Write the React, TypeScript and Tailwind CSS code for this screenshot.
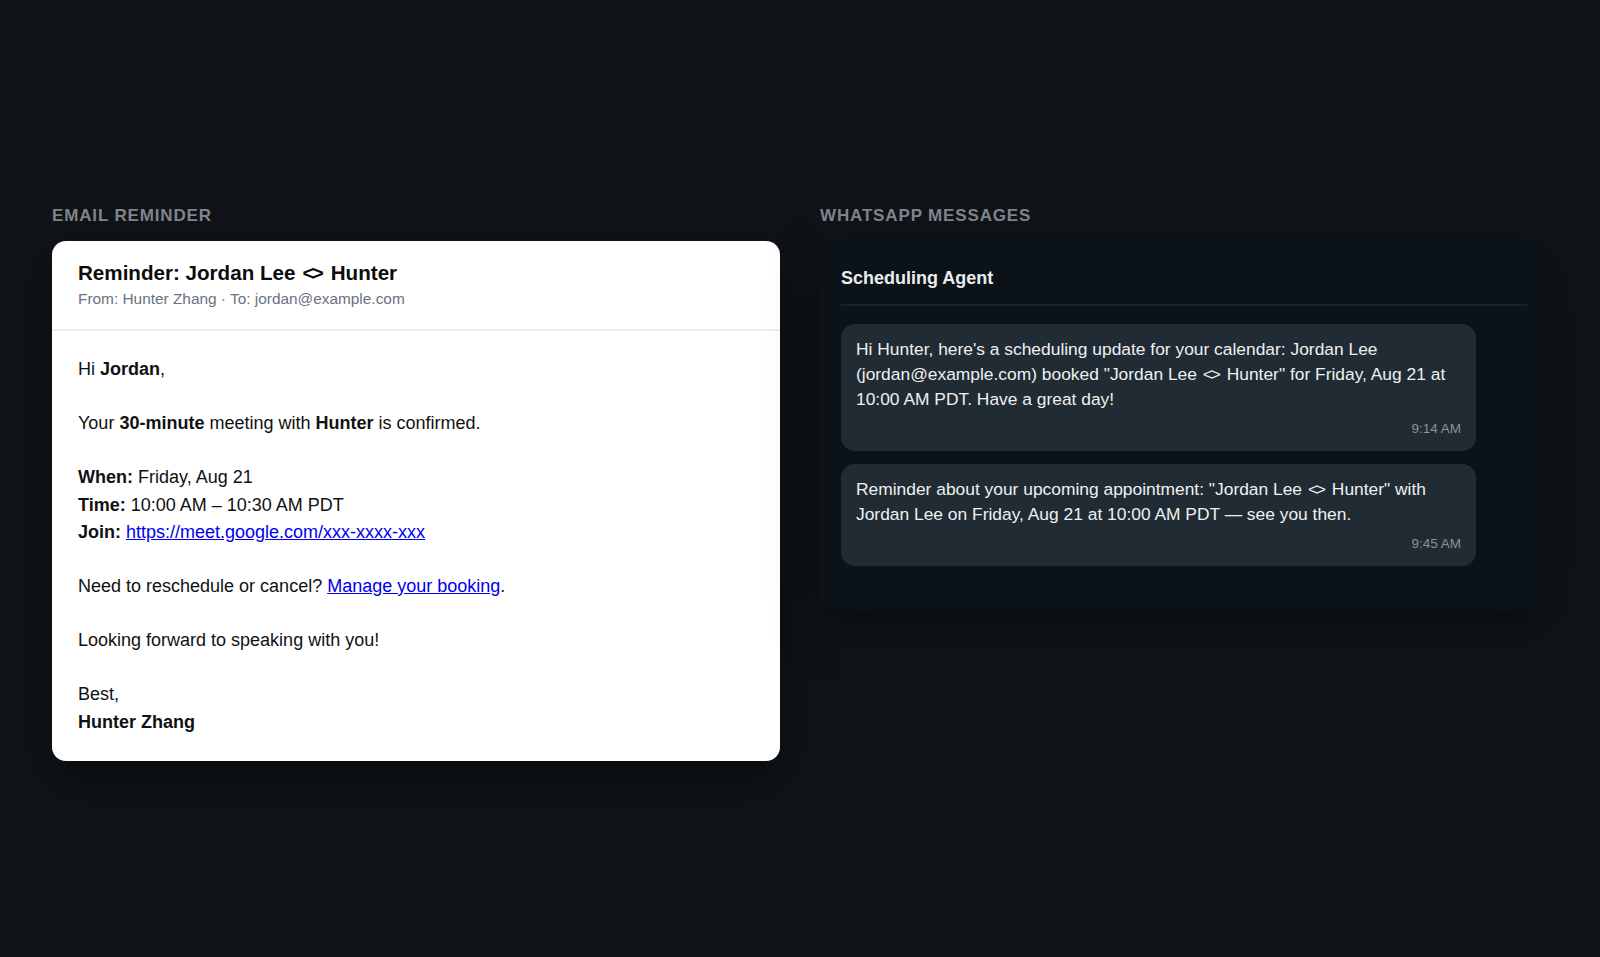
const font = "font-['Liberation_Sans',Arial,sans-serif]";

function Arrows() {
  return (
    <span className="mx-[0.06em]">
      <span className="tracking-[-0.13em]">{"<"}</span>
      {">"}
    </span>
  );
}

function Label({ children }: { children: React.ReactNode }) {
  return (
    <div className="mb-[16px] text-[17px] leading-[18px] font-bold tracking-[0.85px] text-[#7f848b]">
      {children}
    </div>
  );
}

function Bubble({ time, children }: { time: string; children: React.ReactNode }) {
  return (
    <div className="w-[635px] rounded-[14px] bg-[#212b33] px-[15px] pt-[13px] pb-[13px]">
      <p className="text-[17.4px] leading-[25px] text-[#eef0f2]">{children}</p>
      <div className="mt-[8px] text-right text-[13.5px] leading-[18px] text-[#8b9399]">{time}</div>
    </div>
  );
}

function EmailCard() {
  return (
    <div className="h-[520px] overflow-hidden rounded-[14px] bg-white text-[#111111] shadow-[0_16px_50px_rgba(0,0,0,0.45)]">
      <div className="h-[90px] border-b-2 border-[#eeeeee] px-[26px] pt-[19px]">
        <div className="text-[20.6px] leading-[26px] font-bold text-[#0c0c0c]">
          Reminder: Jordan Lee <Arrows /> Hunter
        </div>
        <div className="mt-[3px] text-[15.4px] leading-[20px] text-[#6b7280]">
          From: Hunter Zhang · To: jordan@example.com
        </div>
      </div>
      <div className="px-[26px] pt-[25px] text-[18px] leading-[27.2px]">
        <p>
          Hi <b>Jordan</b>,
        </p>
        <p className="mt-[27px]">
          Your <b>30-minute</b> meeting with <b>Hunter</b> is confirmed.
        </p>
        <p className="mt-[27px]">
          <b>When:</b> Friday, Aug 21
          <br />
          <b>Time:</b> 10:00 AM – 10:30 AM PDT
          <br />
          <b>Join:</b> <a className="text-[#0000ee] underline">https://meet.google.com/xxx-xxxx-xxx</a>
        </p>
        <p className="mt-[27px]">
          Need to reschedule or cancel? <a className="text-[#0000ee] underline">Manage your booking</a>.
        </p>
        <p className="mt-[27px]">Looking forward to speaking with you!</p>
        <p className="mt-[27px]">
          Best,
          <br />
          <b>Hunter Zhang</b>
        </p>
      </div>
    </div>
  );
}

function WhatsAppPanel() {
  return (
    <div className="h-[369px] rounded-[14px] bg-[#0b1218] px-[21px] pt-[25px] shadow-[0_16px_50px_rgba(0,0,0,0.35)]">
      <div className="border-b-2 border-[#1a2229] pb-[14px] text-[18px] leading-[24px] font-bold text-[#e9edef]">
        Scheduling Agent
      </div>
      <div className="mt-[18px] flex flex-col gap-[13px]">
        <Bubble time="9:14 AM">
          Hi Hunter, here's a scheduling update for your calendar: Jordan Lee
          <br />
          (jordan@example.com) booked "Jordan Lee <Arrows /> Hunter" for Friday, Aug 21 at
          <br />
          10:00 AM PDT. Have a great day!
        </Bubble>
        <Bubble time="9:45 AM">
          Reminder about your upcoming appointment: "Jordan Lee <Arrows /> Hunter" with
          <br />
          Jordan Lee on Friday, Aug 21 at 10:00 AM PDT — see you then.
        </Bubble>
      </div>
    </div>
  );
}

export default function App() {
  return (
    <div className={`${font} h-[957px] overflow-hidden bg-[#101418] px-[52px] pt-[207px]`}>
      <div className="grid grid-cols-2 items-start gap-10">
        <div>
          <Label>EMAIL REMINDER</Label>
          <EmailCard />
        </div>
        <div>
          <Label>WHATSAPP MESSAGES</Label>
          <WhatsAppPanel />
        </div>
      </div>
    </div>
  );
}
